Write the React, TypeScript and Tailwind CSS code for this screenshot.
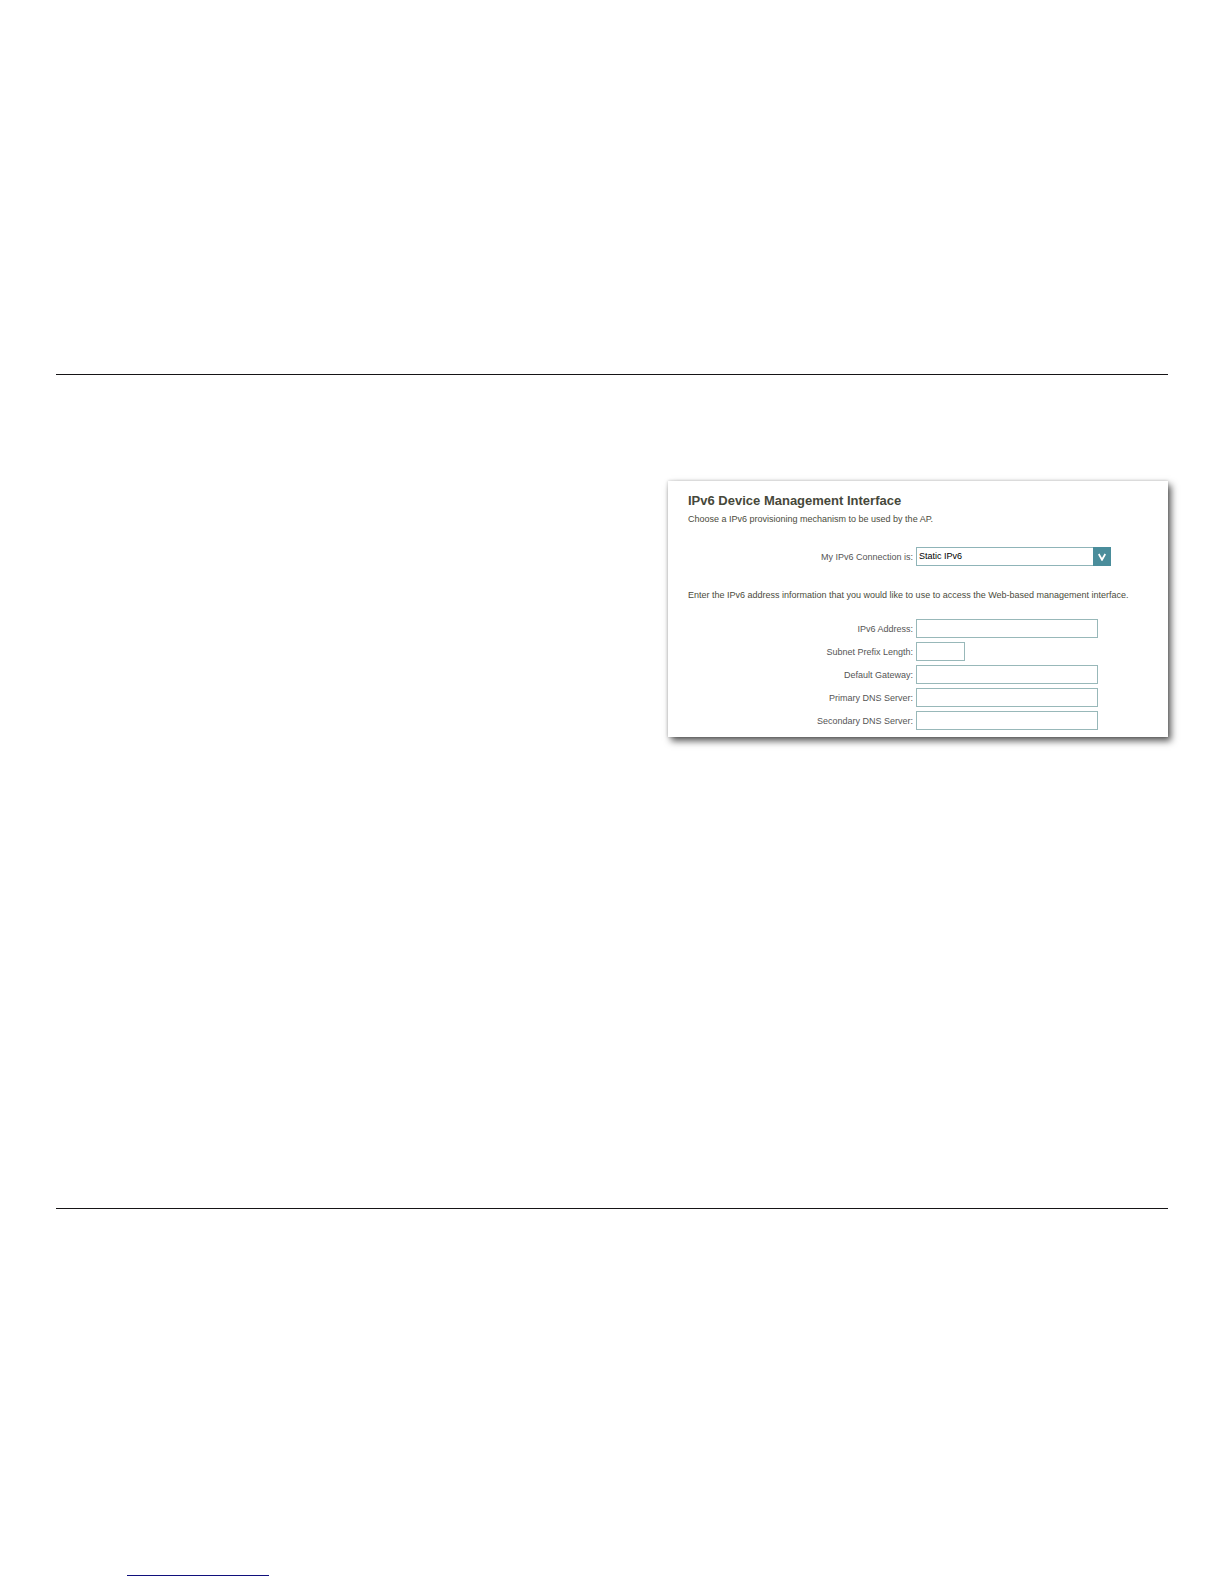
const fields = [
  { id: 'address', label: 'IPv6 Address:', width: 'w-[182px]' },
  { id: 'prefix', label: 'Subnet Prefix Length:', width: 'w-[49px]' },
  { id: 'gateway', label: 'Default Gateway:', width: 'w-[182px]' },
  { id: 'dns1', label: 'Primary DNS Server:', width: 'w-[182px]' },
  { id: 'dns2', label: 'Secondary DNS Server:', width: 'w-[182px]' },
]

const rowClass = 'grid grid-cols-[225px_1fr] items-center gap-[3px]'
const labelClass = 'text-right text-[#555555]'

function ConnectionSelect() {
  return (
    <div className={rowClass}>
      <label htmlFor="connection" className={labelClass}>
        My IPv6 Connection is:
      </label>
      <div className="relative w-[195px]">
        <select
          id="connection"
          defaultValue="static"
          className="block w-full h-[19px] pl-[2px] pr-5 pb-[2px] appearance-none bg-white border border-[#8fb4b8] text-black"
        >
          <option value="static">Static IPv6</option>
        </select>
        <span className="absolute right-0 top-0 w-[18px] h-[19px] bg-[#4a8d9b] flex items-center justify-center pointer-events-none">
          <svg width="8" height="8" viewBox="0 0 8 8" fill="none" stroke="white" strokeWidth="1.8">
            <path d="M0.7 1L4 6.8L7.3 1" />
          </svg>
        </span>
      </div>
    </div>
  )
}

function ManagementPanel() {
  return (
    <form className="w-[500px] max-w-full px-5 pt-3 pb-[7px] bg-white text-[9px] leading-3 text-[#4b4b3c] shadow-[3px_4px_7px_rgba(0,0,0,0.65),0_0_3px_rgba(0,0,0,0.2)]">
      <h1 className="text-[13px] leading-4 font-bold text-[#46483a]">IPv6 Device Management Interface</h1>
      <p className="mt-1">Choose a IPv6 provisioning mechanism to be used by the AP.</p>

      <div className="mt-[22px]">
        <ConnectionSelect />
      </div>

      <p className="mt-[23px] whitespace-nowrap">
        Enter the IPv6 address information that you would like to use to access the Web-based management interface.
      </p>

      <div className="mt-[18px] flex flex-col gap-1">
        {fields.map((field) => (
          <div key={field.id} className={rowClass}>
            <label htmlFor={field.id} className={labelClass}>
              {field.label}
            </label>
            <input
              id={field.id}
              type="text"
              className={`h-[19px] px-[2px] bg-white border border-[#98b8b9] ${field.width}`}
            />
          </div>
        ))}
      </div>
    </form>
  )
}

export default function App() {
  return (
    <div className="bg-white px-14 pt-[374px] pb-2 font-['Liberation_Sans',Arial,sans-serif]">
      <main className="border-y border-[#161416] pt-[106px] pb-[471px] flex justify-end">
        <ManagementPanel />
      </main>
      <footer className="pt-[366px] pl-[71px]">
        <hr className="w-[142px] h-px border-0 bg-[#10107c]" />
      </footer>
    </div>
  )
}
